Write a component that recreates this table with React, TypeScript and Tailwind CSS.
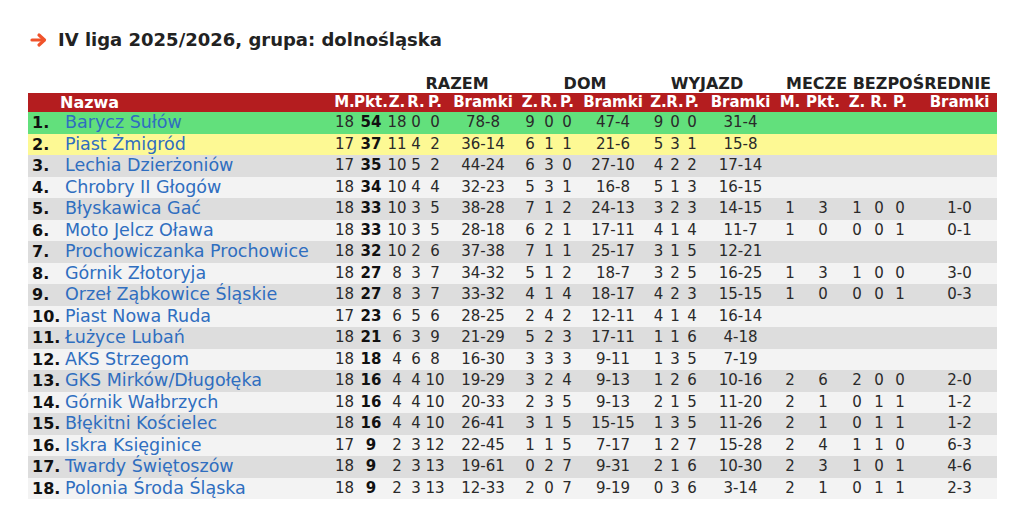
import React from "react";

type Row = {
  n: string;
  name: string;
  m: string;
  pkt: string;
  r: string[];
  d: string[];
  w: string[];
  b?: string[];
};

const rows: Row[] = [
  { n: "1.", name: "Barycz Sułów", m: "18", pkt: "54", r: ["18", "0", "0", "78-8"], d: ["9", "0", "0", "47-4"], w: ["9", "0", "0", "31-4"] },
  { n: "2.", name: "Piast Żmigród", m: "17", pkt: "37", r: ["11", "4", "2", "36-14"], d: ["6", "1", "1", "21-6"], w: ["5", "3", "1", "15-8"] },
  { n: "3.", name: "Lechia Dzierżoniów", m: "17", pkt: "35", r: ["10", "5", "2", "44-24"], d: ["6", "3", "0", "27-10"], w: ["4", "2", "2", "17-14"] },
  { n: "4.", name: "Chrobry II Głogów", m: "18", pkt: "34", r: ["10", "4", "4", "32-23"], d: ["5", "3", "1", "16-8"], w: ["5", "1", "3", "16-15"] },
  { n: "5.", name: "Błyskawica Gać", m: "18", pkt: "33", r: ["10", "3", "5", "38-28"], d: ["7", "1", "2", "24-13"], w: ["3", "2", "3", "14-15"], b: ["1", "3", "1", "0", "0", "1-0"] },
  { n: "6.", name: "Moto Jelcz Oława", m: "18", pkt: "33", r: ["10", "3", "5", "28-18"], d: ["6", "2", "1", "17-11"], w: ["4", "1", "4", "11-7"], b: ["1", "0", "0", "0", "1", "0-1"] },
  { n: "7.", name: "Prochowiczanka Prochowice", m: "18", pkt: "32", r: ["10", "2", "6", "37-38"], d: ["7", "1", "1", "25-17"], w: ["3", "1", "5", "12-21"] },
  { n: "8.", name: "Górnik Złotoryja", m: "18", pkt: "27", r: ["8", "3", "7", "34-32"], d: ["5", "1", "2", "18-7"], w: ["3", "2", "5", "16-25"], b: ["1", "3", "1", "0", "0", "3-0"] },
  { n: "9.", name: "Orzeł Ząbkowice Śląskie", m: "18", pkt: "27", r: ["8", "3", "7", "33-32"], d: ["4", "1", "4", "18-17"], w: ["4", "2", "3", "15-15"], b: ["1", "0", "0", "0", "1", "0-3"] },
  { n: "10.", name: "Piast Nowa Ruda", m: "17", pkt: "23", r: ["6", "5", "6", "28-25"], d: ["2", "4", "2", "12-11"], w: ["4", "1", "4", "16-14"] },
  { n: "11.", name: "Łużyce Lubań", m: "18", pkt: "21", r: ["6", "3", "9", "21-29"], d: ["5", "2", "3", "17-11"], w: ["1", "1", "6", "4-18"] },
  { n: "12.", name: "AKS Strzegom", m: "18", pkt: "18", r: ["4", "6", "8", "16-30"], d: ["3", "3", "3", "9-11"], w: ["1", "3", "5", "7-19"] },
  { n: "13.", name: "GKS Mirków/Długołęka", m: "18", pkt: "16", r: ["4", "4", "10", "19-29"], d: ["3", "2", "4", "9-13"], w: ["1", "2", "6", "10-16"], b: ["2", "6", "2", "0", "0", "2-0"] },
  { n: "14.", name: "Górnik Wałbrzych", m: "18", pkt: "16", r: ["4", "4", "10", "20-33"], d: ["2", "3", "5", "9-13"], w: ["2", "1", "5", "11-20"], b: ["2", "1", "0", "1", "1", "1-2"] },
  { n: "15.", name: "Błękitni Kościelec", m: "18", pkt: "16", r: ["4", "4", "10", "26-41"], d: ["3", "1", "5", "15-15"], w: ["1", "3", "5", "11-26"], b: ["2", "1", "0", "1", "1", "1-2"] },
  { n: "16.", name: "Iskra Księginice", m: "17", pkt: "9", r: ["2", "3", "12", "22-45"], d: ["1", "1", "5", "7-17"], w: ["1", "2", "7", "15-28"], b: ["2", "4", "1", "1", "0", "6-3"] },
  { n: "17.", name: "Twardy Świętoszów", m: "18", pkt: "9", r: ["2", "3", "13", "19-61"], d: ["0", "2", "7", "9-31"], w: ["2", "1", "6", "10-30"], b: ["2", "3", "1", "0", "1", "4-6"] },
  { n: "18.", name: "Polonia Środa Śląska", m: "18", pkt: "9", r: ["2", "3", "13", "12-33"], d: ["2", "0", "7", "9-19"], w: ["0", "3", "6", "3-14"], b: ["2", "1", "0", "1", "1", "2-3"] },
];

const GRID =
  "grid grid-cols-[32px_273px_23px_30px_22px_16px_22px_74px_20px_18px_18px_74px_17px_16px_18px_79px_20px_46px_22px_22px_20px_87px]";

const font = { fontFamily: '"DejaVu Sans", Verdana, sans-serif' };

function rowBg(i: number) {
  if (i === 0) return "bg-[#62e07c]";
  if (i === 1) return "bg-[#fdf994]";
  return i % 2 === 0 ? "bg-[#dddddd]" : "bg-[#f3f3f3]";
}

export default function App() {
  const headers = [
    "M.", "Pkt.", "Z.", "R.", "P.", "Bramki",
    "Z.", "R.", "P.", "Bramki",
    "Z.", "R.", "P.", "Bramki",
    "M.", "Pkt.", "Z.", "R.", "P.", "Bramki",
  ];
  return (
    <div className="w-[1024px] h-[523px] bg-white overflow-hidden" style={font}>
      <div className="pt-[29px] pl-[28px]">
        <div className="flex items-center h-[22px]">
          <svg width="18" height="16" viewBox="0 0 18 16" className="ml-[2px] mr-[10px]">
            <path d="M2 8 H14" stroke="#f0532b" strokeWidth="3.2" strokeLinecap="round" />
            <path d="M9 3 L14.5 8 L9 13" stroke="#f0532b" strokeWidth="3.2" fill="none" strokeLinecap="round" strokeLinejoin="round" />
          </svg>
          <span className="text-[18px] font-bold text-[#222] leading-[22px]">
            IV liga 2025/2026, grupa: dolnośląska
          </span>
        </div>

        <div className="mt-[23px] w-[969px]">
          <div className={`${GRID} h-[19px] items-center text-[16px] font-bold text-[#222] leading-[19px] whitespace-nowrap`}>
            <div className="col-start-5 col-span-4 text-center pl-[8px]">RAZEM</div>
            <div className="col-start-9 col-span-4 text-center">DOM</div>
            <div className="col-start-13 col-span-4 text-center pr-[16px]">WYJAZD</div>
            <div className="col-start-17 col-span-6 text-center">MECZE BEZPOŚREDNIE</div>
          </div>

          <div className={`${GRID} h-[19px] items-center bg-[#b41d1f] text-white font-bold text-[15px] leading-[19px] whitespace-nowrap`}>
            <div />
            <div className="pl-[0px] text-[16px]">Nazwa</div>
            {headers.map((h, i) => (
              <div key={i} className={`flex justify-center ${i === 19 ? "pl-[12px]" : ""}`}>
                {h}
              </div>
            ))}
          </div>

          {rows.map((r, i) => (
            <div
              key={i}
              className={`${GRID} h-[21.5px] items-center ${rowBg(i)} text-[#2a2a2a] text-[15px] leading-[21.5px] whitespace-nowrap`}
            >
              <div className="pl-[4px] font-bold text-[16px] text-[#111]">{r.n}</div>
              <div className="pl-[5px] text-[17.5px] text-[#2f6ec0]">{r.name}</div>
              <div className="flex justify-center">{r.m}</div>
              <div className="flex justify-center font-bold text-[#111]">{r.pkt}</div>
              {[...r.r, ...r.d, ...r.w].map((v, j) => (
                <div key={j} className="flex justify-center">{v}</div>
              ))}
              {(r.b ?? ["", "", "", "", "", ""]).map((v, j) => (
                <div key={"b" + j} className={`flex justify-center ${j === 5 ? "pl-[12px]" : ""}`}>
                  {v}
                </div>
              ))}
            </div>
          ))}
        </div>
      </div>
    </div>
  );
}
